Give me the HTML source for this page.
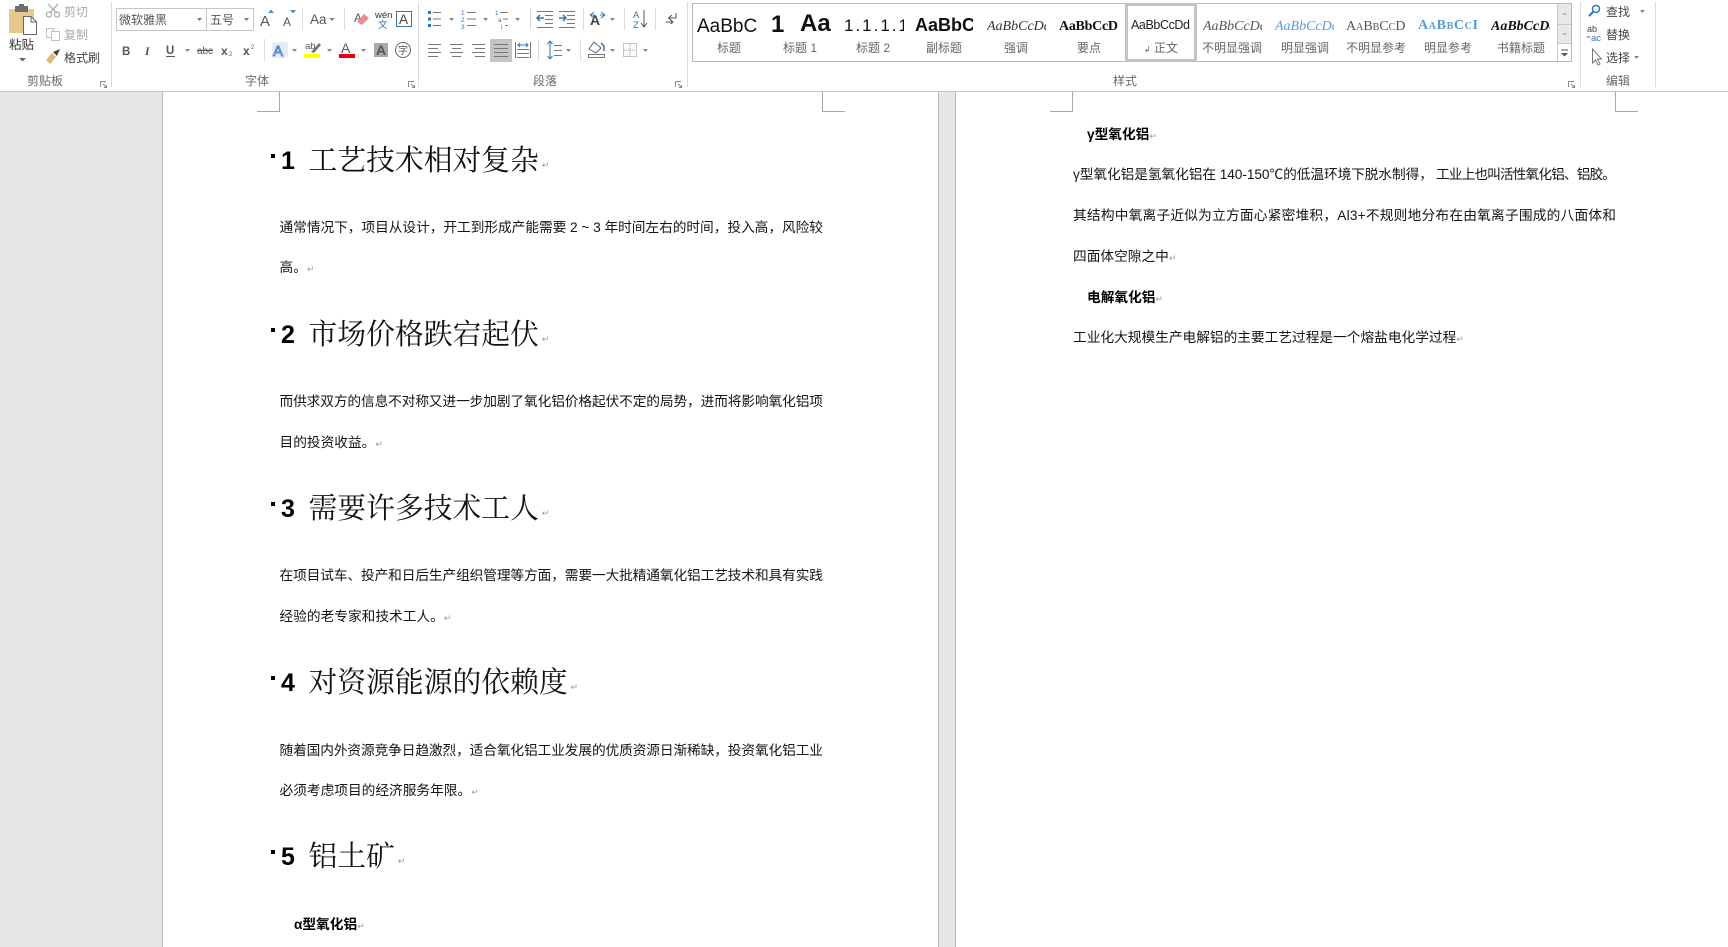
<!DOCTYPE html>
<html lang="zh">
<head>
<meta charset="utf-8">
<title>Word</title>
<style>
html,body{margin:0;padding:0;width:1728px;height:947px;overflow:hidden;background:#e6e6e6}
svg{display:block;position:absolute;left:0;top:0}
text{font-family:"Liberation Sans","Noto Sans CJK SC",sans-serif}
.b{font-size:13.7px;fill:#151515;font-family:"Liberation Sans","Noto Sans CJK SC",sans-serif}
.bh{font-size:13.7px;fill:#000;font-weight:700}
.h{font-size:28.8px;fill:#111;font-family:"Liberation Serif","Noto Serif CJK SC",serif}
.n{font-size:25px;fill:#000;font-weight:700;font-family:"Liberation Sans",sans-serif}
.r{font-size:9px;fill:#999;font-weight:400;font-family:"DejaVu Sans",sans-serif}
.l{font-size:12px;fill:#6a6a6a;text-anchor:middle}
.t{font-size:12px;fill:#444}
.d{font-size:12px;fill:#aaa}
.s{font-size:12px;fill:#666;text-anchor:middle}
.sep{stroke:#dcdcdc;stroke-width:1}
.ln{stroke:#777;stroke-width:1;fill:none}
.blue{fill:#2f75b5}
</style>
</head>
<body>
<svg width="1728" height="947" viewBox="0 0 1728 947" xmlns="http://www.w3.org/2000/svg">
<!-- backgrounds -->
<rect width="1728" height="947" fill="#e6e6e6"/>
<rect x="0" y="0" width="1728" height="91" fill="#fff"/>
<rect x="0" y="91" width="1728" height="1" fill="#c8c8c8"/>
<rect x="162" y="92" width="777" height="855" fill="#fff"/>
<rect x="955" y="92" width="773" height="855" fill="#fff"/>
<path d="M162.5 92V947M938.5 92V947M955.5 92V947" stroke="#b9b9b9" fill="none"/>
<!-- crop marks -->
<path d="M257 111.5H279.5V92M822.5 92V111.5H845M1050 111.5H1072.5V92M1615.5 92V111.5H1638" stroke="#a8a8a8" fill="none"/>

<!-- page 1 -->
<rect x="271" y="154" width="4" height="4" fill="#000"/>
<text class="n" x="281" y="169">1</text>
<text class="h" x="308.500" y="170">工艺技术相对复杂<tspan class="r" dy="-2"> ↵</tspan></text>
<text class="b" x="279.500" y="232" textLength="543.500" lengthAdjust="spacing">通常情况下，项目从设计，开工到形成产能需要 2 ~ 3 年时间左右的时间，投入高，风险较</text>
<text class="b" x="279.500" y="272">高。<tspan class="r">↵</tspan></text>

<rect x="271" y="328" width="4" height="4" fill="#000"/>
<text class="n" x="281" y="343">2</text>
<text class="h" x="308.500" y="344">市场价格跌宕起伏<tspan class="r" dy="-2"> ↵</tspan></text>
<text class="b" x="279.500" y="406" textLength="543.500" lengthAdjust="spacing">而供求双方的信息不对称又进一步加剧了氧化铝价格起伏不定的局势，进而将影响氧化铝项</text>
<text class="b" x="279.500" y="447">目的投资收益。<tspan class="r">↵</tspan></text>

<rect x="271" y="502" width="4" height="4" fill="#000"/>
<text class="n" x="281" y="517">3</text>
<text class="h" x="308.500" y="518">需要许多技术工人<tspan class="r" dy="-2"> ↵</tspan></text>
<text class="b" x="279.500" y="580" textLength="543.500" lengthAdjust="spacing">在项目试车、投产和日后生产组织管理等方面，需要一大批精通氧化铝工艺技术和具有实践</text>
<text class="b" x="279.500" y="621">经验的老专家和技术工人。<tspan class="r">↵</tspan></text>

<rect x="271" y="676" width="4" height="4" fill="#000"/>
<text class="n" x="281" y="691">4</text>
<text class="h" x="308.500" y="692">对资源能源的依赖度<tspan class="r" dy="-2"> ↵</tspan></text>
<text class="b" x="279.500" y="755" textLength="543.500" lengthAdjust="spacing">随着国内外资源竞争日趋激烈，适合氧化铝工业发展的优质资源日渐稀缺，投资氧化铝工业</text>
<text class="b" x="279.500" y="795">必须考虑项目的经济服务年限。<tspan class="r">↵</tspan></text>

<rect x="271" y="850" width="4" height="4" fill="#000"/>
<text class="n" x="281" y="865">5</text>
<text class="h" x="308.500" y="866">铝土矿<tspan class="r" dy="-2"> ↵</tspan></text>
<text class="bh" x="294" y="929">α型氧化铝<tspan class="r">↵</tspan></text>

<!-- page 2 -->
<text class="bh" x="1087" y="139">γ型氧化铝<tspan class="r">↵</tspan></text>
<text class="b" x="1073" y="179" textLength="360" lengthAdjust="spacing">γ型氧化铝是氢氧化铝在 140-150℃的低温环境下脱水制得，</text>
<text class="b" x="1436" y="179" textLength="180" lengthAdjust="spacing">工业上也叫活性氧化铝、铝胶。</text>
<text class="b" x="1073" y="220" textLength="543" lengthAdjust="spacing">其结构中氧离子近似为立方面心紧密堆积，Al3+不规则地分布在由氧离子围成的八面体和</text>
<text class="b" x="1073" y="261">四面体空隙之中<tspan class="r">↵</tspan></text>
<text class="bh" x="1087" y="302">电解氧化铝<tspan class="r">↵</tspan></text>
<text class="b" x="1073" y="342">工业化大规模生产电解铝的主要工艺过程是一个熔盐电化学过程<tspan class="r">↵</tspan></text>

<!-- ribbon separators -->
<path class="sep" d="M111.5 2V87M418.5 2V87M687.5 2V87M1580.5 2V87M1655.5 2V87"/>
<path class="sep" d="M302.5 8V30M344.5 8V30M264.5 39V61M530.5 8V30M583.5 8V30M624.5 8V30M655.5 8V30M538.5 39V61M580.5 39V61"/>

<!-- clipboard group -->
<rect x="9" y="9" width="25" height="24" fill="#e9c88f"/>
<rect x="15" y="6" width="13" height="6" fill="#6d6d6d"/>
<rect x="19" y="4" width="5" height="4" fill="#6d6d6d"/>
<path d="M23.5 16.5H31L36.5 22V34.5H23.5Z" fill="#fff" stroke="#666"/>
<path d="M31 16.5V22H36.5" fill="none" stroke="#666"/>
<text x="9" y="49" style="font-size:12.5px;fill:#333">粘贴</text>
<path d="M19 58H26L22.5 61.5Z" fill="#666"/>
<g stroke="#b4b4b4" fill="none" stroke-width="1.4">
<path d="M48 4L57 13M58 4L50 13"/><circle cx="49" cy="14.5" r="2.6"/><circle cx="57" cy="14.5" r="2.6"/>
</g>
<text class="d" x="64" y="16">剪切</text>
<g stroke="#c0c0c0" fill="#fff"><rect x="46.5" y="28.5" width="7" height="9"/><rect x="51.5" y="31.5" width="8" height="9"/></g>
<text class="d" x="64" y="39">复制</text>
<path d="M46 60L52 53L56 57L50 64Z" fill="#e2b778"/><path d="M53 52L60 49L57 56Z" fill="#444"/>
<text class="t" x="64" y="62" style="font-size:12px">格式刷</text>
<text class="l" x="45" y="85">剪贴板</text>
<path d="M100.5 81.5H106M100.5 81.5V87M103 84L106.5 87.5M106.5 85V87.5H104" stroke="#888" fill="none"/>

<!-- font group -->
<rect x="116.5" y="8.5" width="137" height="22" fill="#fff" stroke="#c6c6c6"/>
<path d="M206.5 8.5V30.5" stroke="#c6c6c6"/>
<text x="119" y="24" style="font-size:12px;fill:#555">微软雅黑</text>
<path d="M197 18H202L199.500 21Z" fill="#777"/>
<text x="210" y="24" style="font-size:12px;fill:#555">五号</text>
<path d="M244 18H249L246.500 21Z" fill="#777"/>
<text x="260" y="26" style="font-size:15px;fill:#555">A</text>
<path d="M268 13L271 9.500L274 13Z" fill="#4a8cc7"/>
<text x="283" y="26" style="font-size:12px;fill:#555">A</text>
<path d="M290 10H296L293 13.500Z" fill="#4a8cc7"/>
<text x="310" y="24" style="font-size:13.500px;fill:#555">Aa</text>
<path d="M329 18H335L332 21Z" fill="#888"/>
<text x="354" y="22" style="font-size:12px;fill:#555">A</text>
<path d="M357 22L364 14L369 18L362 25Z" fill="#ea8b98"/>
<text x="375" y="18" style="font-size:9.500px;fill:#333">wén</text>
<text x="378" y="28" style="font-size:9.500px;fill:#2f75b5">文</text>
<rect x="396.500" y="11.500" width="15" height="15" fill="#fff" stroke="#41729f"/>
<text x="399" y="24" style="font-size:13.500px;fill:#444">A</text>

<text x="122" y="55" style="font-size:11.500px;font-weight:700;fill:#555">B</text>
<text x="145" y="55" style="font-size:11.500px;font-style:italic;font-weight:700;font-family:'Liberation Serif',serif;fill:#555">I</text>
<text x="166" y="54" style="font-size:11.500px;font-weight:700;fill:#555">U</text>
<path d="M166 56.500H175" stroke="#555"/>
<path d="M185 49H190L187.500 52Z" fill="#888"/>
<text x="197" y="54" style="font-size:10px;fill:#555" textLength="16">abc</text>
<path d="M197 50.500H213" stroke="#555"/>
<text x="221" y="55" style="font-size:12px;font-weight:700;fill:#555">x</text><text x="229" y="56" style="font-size:6px;fill:#2f75b5">2</text>
<text x="243" y="55" style="font-size:12px;font-weight:700;fill:#555">x</text><text x="251" y="49" style="font-size:6px;fill:#2f75b5">2</text>
<rect x="272" y="42" width="16" height="16" rx="3" fill="#e4edf6"/>
<text x="273" y="56" style="font-size:15px;fill:#fff;stroke:#4f86c0;stroke-width:1">A</text>
<path d="M292 49H297L294.500 52Z" fill="#888"/>
<text x="305" y="49" style="font-size:9.500px;fill:#555">ab</text>
<path d="M311 52L319 43L321 45L314 53Z" fill="#777"/>
<rect x="304" y="54" width="16" height="4" fill="#ffff00"/>
<path d="M327 49H332L329.500 52Z" fill="#888"/>
<text x="341" y="53" style="font-size:14px;fill:#555">A</text>
<rect x="339" y="54" width="16" height="4" fill="#e60012"/>
<path d="M361 49H366L363.500 52Z" fill="#888"/>
<rect x="374" y="43" width="14" height="14" fill="#a9a9a9"/>
<text x="376" y="55" style="font-size:14px;font-weight:700;fill:#555">A</text>
<circle cx="403" cy="50" r="7.500" fill="#fff" stroke="#666"/>
<text x="398" y="54" style="font-size:10px;fill:#555">字</text>
<text class="l" x="257" y="85">字体</text>
<path d="M408.500 81.500H414M408.500 81.500V87M411 84L414.500 87.500M414.500 85V87.500H412" stroke="#888" fill="none"/>

<!-- paragraph group -->
<g fill="#2f75b5"><rect x="428" y="11" width="3" height="3"/><rect x="428" y="17.500" width="3" height="3"/><rect x="428" y="24" width="3" height="3"/></g>
<path class="ln" d="M433 12.500H441M433 19H441M433 25.500H441"/>
<path d="M449 18H454L451.500 21Z" fill="#888"/>
<text x="461" y="15" style="font-size:6.500px;fill:#2f75b5">1</text><text x="461" y="22" style="font-size:6.500px;fill:#2f75b5">2</text><text x="461" y="29" style="font-size:6.500px;fill:#2f75b5">3</text>
<path class="ln" d="M467 12.500H476M467 19H476M467 25.500H476"/>
<path d="M483 18H488L485.500 21Z" fill="#888"/>
<text x="495" y="15" style="font-size:6.500px;fill:#2f75b5">1</text><text x="498" y="22" style="font-size:6.500px;fill:#2f75b5">a</text><text x="501" y="29" style="font-size:6.500px;fill:#2f75b5">i</text>
<path class="ln" d="M500 12.500H508M503 19H508M505 25.500H508"/>
<path d="M515 18H520L517.500 21Z" fill="#888"/>
<path class="ln" d="M545 15.500H553M545 19.500H553M545 23.500H553M537 27.500H553M537 11.500H553"/>
<path d="M537 18H544M540 15L537 18L540 21" stroke="#2f75b5" stroke-width="1.500" fill="none"/>
<path class="ln" d="M567 15.500H575M567 19.500H575M567 23.500H575M559 11.500H575M559 27.500H575"/>
<path d="M559 18H566M563 15L566 18L563 21" stroke="#2f75b5" stroke-width="1.500" fill="none"/>
<text x="590" y="25" style="font-size:14px;font-weight:700;fill:#444">A</text>
<path d="M590 15L594 12M590 15L594 18M605 15L601 12M605 15L601 18M590 15H595M605 15H600" stroke="#2f75b5" fill="none"/>
<path d="M610 18H615L612.500 21Z" fill="#888"/>
<text x="633" y="18" style="font-size:9.500px;fill:#2f75b5">A</text>
<text x="633" y="28" style="font-size:9.500px;fill:#2f75b5">Z</text>
<path d="M644 10V26M641 23L644 27L647 23" stroke="#555" fill="none"/>
<path d="M676 13V18H669M672 15L668.500 18L672 21" stroke="#555" fill="none"/>
<path d="M666 22H673M670.500 20L673 22L670.500 24" stroke="#555" fill="none"/>

<path class="ln" d="M428 44.500H441M428 48.500H438M428 52.500H441M428 56.500H438"/>
<path class="ln" d="M450 44.500H463M452 48.500H461M450 52.500H463M452 56.500H461"/>
<path class="ln" d="M472 44.500H485M475 48.500H485M472 52.500H485M475 56.500H485"/>
<rect x="490" y="39" width="22" height="23" fill="#c4c4c4"/>
<path class="ln" d="M494 44.500H508M494 48.500H508M494 52.500H508M494 56.500H508"/>
<path class="ln" d="M515.500 42V58M530.500 42V58M517 49.500H529M517 53.500H529M517 57.500H529"/>
<path d="M518 45H528M520 43L518 45L520 47M526 43L528 45L526 47" stroke="#2f75b5" fill="none"/>
<path d="M550 41V59M547.500 44L550 41L552.500 44M547.500 56L550 59L552.500 56" stroke="#2f75b5" fill="none"/>
<path class="ln" d="M554 45.500H562M554 50.500H562M554 55.500H562"/>
<path d="M566 49H571L568.500 52Z" fill="#888"/>
<path d="M594 42L601 48L596 53L589 49Z" fill="#fff" stroke="#666"/>
<path d="M601 43L604 46V51" stroke="#2f75b5" stroke-width="1.500" fill="none"/>
<rect x="588.500" y="54.500" width="16" height="3" fill="#fff" stroke="#777"/>
<path d="M610 49H615L612.500 52Z" fill="#888"/>
<rect x="623.500" y="43.500" width="13" height="13" fill="none" stroke="#888" stroke-dasharray="1 1"/>
<path d="M630 44V56M624 50H636" stroke="#999" stroke-dasharray="1 1"/>
<path d="M643 49H648L645.500 52Z" fill="#888"/>
<text class="l" x="545" y="85">段落</text>
<path d="M675.500 81.500H681M675.500 81.500V87M678 84L681.500 87.500M681.500 85V87.500H679" stroke="#888" fill="none"/>

<!-- styles gallery -->
<rect x="692.500" y="3.500" width="879" height="58" fill="#fff" stroke="#b8b8b8"/>
<rect x="1125" y="3" width="72" height="59" fill="#fff"/>
<rect x="1126.500" y="4.500" width="69" height="56" fill="none" stroke="#c4c4c4" stroke-width="3"/>
<rect x="1558" y="4" width="13" height="39" fill="#e8e8e8"/>
<path d="M1557.500 4V61M1558 24.500H1571M1558 43.500H1571" stroke="#c8c8c8" fill="none"/>
<path d="M1562 15H1567L1564.500 12Z" fill="#bbb"/>
<path d="M1562 33H1567L1564.500 36Z" fill="#bbb"/>
<path d="M1561 50H1568" stroke="#555"/><path d="M1561 53H1568L1564.500 56.500Z" fill="#555"/>

<svg x="697" y="6" width="62" height="34" viewBox="0 0 62 34"><text x="0" y="26" style="font-size:19px;fill:#111">AaBbC</text></svg>
<text x="771" y="32" style="font-size:24px;font-weight:700;fill:#111">1</text>
<text x="800" y="31" style="font-size:24px;font-weight:700;fill:#111">Aa</text>
<svg x="844" y="6" width="60" height="34" viewBox="0 0 60 34"><text x="0" y="25" style="font-size:17px;fill:#111;letter-spacing:2px">1.1.1.1</text></svg>
<svg x="915" y="6" width="58" height="34" viewBox="0 0 58 34"><text x="0" y="25" style="font-size:18px;font-weight:700;fill:#111">AaBbCc</text></svg>
<svg x="987" y="6" width="59" height="34" viewBox="0 0 59 34"><text x="0" y="24" style="font-size:14px;font-style:italic;font-family:'Liberation Serif',serif;fill:#333">AaBbCcDd</text></svg>
<text x="1059" y="30" style="font-size:14px;font-weight:700;font-family:'Liberation Serif',serif;fill:#111" textLength="59">AaBbCcD</text>
<text x="1131" y="29" style="font-size:12.500px;fill:#222" textLength="59" lengthAdjust="spacing">AaBbCcDd</text>
<svg x="1203" y="6" width="59" height="34" viewBox="0 0 59 34"><text x="0" y="24" style="font-size:14px;font-style:italic;font-family:'Liberation Serif',serif;fill:#555">AaBbCcDd</text></svg>
<svg x="1275" y="6" width="59" height="34" viewBox="0 0 59 34"><text x="0" y="24" style="font-size:14px;font-style:italic;font-family:'Liberation Serif',serif;fill:#5b9bd5">AaBbCcDd</text></svg>
<svg x="1346" y="6" width="59" height="34" viewBox="0 0 59 34"><text x="0" y="24" style="font-size:14px;font-variant:small-caps;font-family:'Liberation Serif',serif;fill:#555">AaBbCcDd</text></svg>
<text x="1418" y="29" style="font-size:14px;font-variant:small-caps;font-weight:700;font-family:'Liberation Serif',serif;fill:#5b9bd5" textLength="60">AaBbCcI</text>
<svg x="1491" y="6" width="59" height="34" viewBox="0 0 59 34"><text x="0" y="24" style="font-size:14px;font-style:italic;font-weight:700;font-family:'Liberation Serif',serif;fill:#111">AaBbCcDd</text></svg>

<text class="s" x="729" y="52">标题</text>
<text class="s" x="800" y="52">标题 1</text>
<text class="s" x="873" y="52">标题 2</text>
<text class="s" x="944" y="52">副标题</text>
<text class="s" x="1016" y="52">强调</text>
<text class="s" x="1089" y="52">要点</text>
<text class="s" x="1161" y="52"><tspan style="font-size:8px;font-family:'DejaVu Sans'">↲</tspan> 正文</text>
<text class="s" x="1232" y="52">不明显强调</text>
<text class="s" x="1305" y="52">明显强调</text>
<text class="s" x="1376" y="52">不明显参考</text>
<text class="s" x="1448" y="52">明显参考</text>
<text class="s" x="1521" y="52">书籍标题</text>
<text class="l" x="1125" y="85">样式</text>
<path d="M1568.500 81.500H1574M1568.500 81.500V87M1571 84L1574.500 87.500M1574.500 85V87.500H1572" stroke="#888" fill="none"/>

<!-- editing group -->
<circle cx="1596" cy="9" r="3.500" fill="#fff" stroke="#2f75b5" stroke-width="1.500"/>
<path d="M1593 12L1589 16" stroke="#2f75b5" stroke-width="2"/>
<text class="t" x="1606" y="16">查找</text>
<path d="M1640 10H1645L1642.500 13Z" fill="#888"/>
<text x="1587" y="32" style="font-size:9px;fill:#444">ab</text>
<text x="1591" y="41" style="font-size:9.500px;fill:#2f75b5">ac</text>
<path d="M1587 37H1590" stroke="#555"/>
<text class="t" x="1606" y="39">替换</text>
<path d="M1592.500 49V63L1595.500 60L1598 65L1600 64L1597.500 59L1601.500 59Z" fill="#fff" stroke="#777"/>
<text class="t" x="1606" y="62">选择</text>
<path d="M1634 56H1639L1636.500 59Z" fill="#888"/>
<text class="l" x="1618" y="85">编辑</text>
</svg>
</body>
</html>
